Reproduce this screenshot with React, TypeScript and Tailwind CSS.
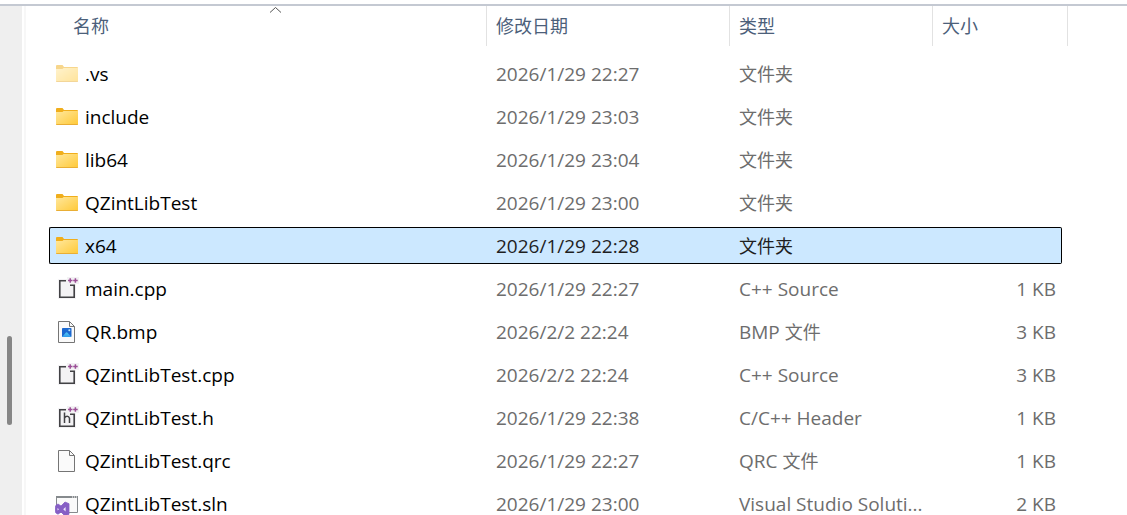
type IconKind = "folder" | "hiddenFolder" | "cpp" | "header" | "image" | "blank" | "solution";

type FileEntry = {
  name: string;
  date: string;
  type: string;
  size?: string;
  icon: IconKind;
};

const files: FileEntry[] = [
  { name: ".vs", date: "2026/1/29 22:27", type: "文件夹", icon: "hiddenFolder" },
  { name: "include", date: "2026/1/29 23:03", type: "文件夹", icon: "folder" },
  { name: "lib64", date: "2026/1/29 23:04", type: "文件夹", icon: "folder" },
  { name: "QZintLibTest", date: "2026/1/29 23:00", type: "文件夹", icon: "folder" },
  { name: "x64", date: "2026/1/29 22:28", type: "文件夹", icon: "folder" },
  { name: "main.cpp", date: "2026/1/29 22:27", type: "C++ Source", size: "1 KB", icon: "cpp" },
  { name: "QR.bmp", date: "2026/2/2 22:24", type: "BMP 文件", size: "3 KB", icon: "image" },
  { name: "QZintLibTest.cpp", date: "2026/2/2 22:24", type: "C++ Source", size: "3 KB", icon: "cpp" },
  { name: "QZintLibTest.h", date: "2026/1/29 22:38", type: "C/C++ Header", size: "1 KB", icon: "header" },
  { name: "QZintLibTest.qrc", date: "2026/1/29 22:27", type: "QRC 文件", size: "1 KB", icon: "blank" },
  { name: "QZintLibTest.sln", date: "2026/1/29 23:00", type: "Visual Studio Soluti...", size: "2 KB", icon: "solution" },
];

const selected = "x64";

function FolderShape() {
  return (
    <>
      <defs>
        <linearGradient id="folderFill" x1="0" y1="0" x2="1" y2="1">
          <stop offset="0" stopColor="#ffe79c" />
          <stop offset="1" stopColor="#ffc937" />
        </linearGradient>
      </defs>
      <path d="M1 5a1 1 0 0 1 1-1h5.5l1.500 2h13a1 1 0 0 1 1 1v3H1z" fill="#f0ae1c" />
      <path d="M1 8h6.500L8.500 7H23v13a1 1 0 0 1-1 1H2a1 1 0 0 1-1-1z" fill="url(#folderFill)" />
      <path d="M1 20h22a1 1 0 0 1-1 1H2a1 1 0 0 1-1-1z" fill="#e9ae35" />
    </>
  );
}

function PageShape() {
  return (
    <>
      <path d="M3.500 2.500h11l5 5v16h-16z" fill="#fafafa" stroke="#757575" />
      <path d="M14.500 2.500v5h5" fill="none" stroke="#757575" />
    </>
  );
}

function SourceShape() {
  return (
    <>
      <path d="M3 3h9V1h12v7h-3v15H3z" fill="#f3f2f4" />
      <path d="M11 4.800H4.800v16.400h14.400V9.200H15" fill="none" stroke="#424245" strokeWidth="1.600" />
      <path d="M13 4.500h4.500M15.200 2.300v4.500M18.200 4.500h4.500M20.400 2.300v4.500" stroke="#9b4f96" strokeWidth="1.500" />
    </>
  );
}

function FileIcon({ kind }: { kind: IconKind }) {
  return (
    <svg width="24" height="25" viewBox="0 0 24 25" className="shrink-0" aria-hidden="true">
      {kind === "folder" && <FolderShape />}
      {kind === "hiddenFolder" && (
        <g opacity="0.5">
          <FolderShape />
        </g>
      )}
      {kind === "cpp" && <SourceShape />}
      {kind === "header" && (
        <>
          <SourceShape />
          <path
            d="M9.500 7.500V18M9.500 13q1-1.700 2.700-1.700t2.300 2V18"
            fill="none"
            stroke="#424245"
            strokeWidth="1.500"
          />
        </>
      )}
      {kind === "blank" && <PageShape />}
      {kind === "image" && (
        <>
          <defs>
            <linearGradient id="mountainFill" x1="0" y1="0" x2="0" y2="1">
              <stop offset="0" stopColor="#55c8f5" />
              <stop offset="1" stopColor="#2f9bea" />
            </linearGradient>
          </defs>
          <PageShape />
          <rect x="7" y="9" width="9.500" height="9" rx="0.800" fill="#1c68cf" />
          <path d="M7.300 17.800l3.400-4q.9-1 1.800 0l3.700 4q-.2.200-.5.200H7.800z" fill="url(#mountainFill)" />
          <circle cx="14.300" cy="11.200" r="1" fill="#b9e6fb" />
        </>
      )}
      {kind === "solution" && (
        <>
          <path d="M1.500 5.500h21v16h-21z" fill="#fafafa" stroke="#868a8d" />
          <path d="M1 5h22v2H1z" fill="#868a8d" />
          <path d="M17 6h1M19 6h1M21 6h1" stroke="#fff" />
          <path
            d="M1 14.200l2-1.200 3 2 4-4 4 1.700v10.600l-4 1.700-4-4-3 2.200-2-1.200-.8-1.500v-4z"
            fill="#865fc5"
            stroke="#865fc5"
            strokeWidth="0.800"
            strokeLinejoin="round"
          />
          <path d="M2.500 17v2.400L4 18.200zM10.600 16v4.400L8.200 18.200z" fill="#efe6fb" />
        </>
      )}
    </svg>
  );
}

// Chinese glyphs are set slightly smaller than the Latin text beside them
function Label({ text }: { text: string }) {
  return (
    <>
      {text.split(/([\u4e00-\u9fff]+)/).map((part, i) =>
        i % 2 === 1 ? (
          <span key={i} className="text-lg/6">
            {part}
          </span>
        ) : (
          part
        )
      )}
    </>
  );
}

function FileRow({ file }: { file: FileEntry }) {
  const active = file.name === selected;
  const box = active ? "border-black bg-[#cce8ff] text-[#1f1f1f]" : "border-transparent text-[#6d6d6d]";
  const cell = `flex h-[37px] items-center border-y whitespace-nowrap ${box}`;

  return (
    <tr className="h-[43px]" aria-selected={active}>
      <td className="p-0">
        <div className={`${cell} gap-1.5 rounded-l-xs border-l pl-[5px]`}>
          <FileIcon kind={file.icon} />
          <span className="text-black">{file.name}</span>
        </div>
      </td>
      <td className="p-0">
        <div className={`${cell} pl-[9px]`}>{file.date}</div>
      </td>
      <td className="p-0">
        <div className={`${cell} pl-[9px]`}>
          <span className="whitespace-pre">
            <Label text={file.type} />
          </span>
        </div>
      </td>
      <td className="p-0">
        <div className={`${cell} mr-1.5 justify-end rounded-r-xs border-r pr-[5px]`}>{file.size}</div>
      </td>
    </tr>
  );
}

function HeaderCell({ label, sorted }: { label: string; sorted?: boolean }) {
  return (
    <th scope="col" className="h-[46px] p-0 align-top font-normal" aria-sort={sorted ? "ascending" : undefined}>
      <div className="relative h-10 border-r border-[#e2e2e2]">
        <button type="button" className={`flex h-full w-full items-center ${sorted ? "pl-6" : "pl-[9px]"}`}>
          {label}
        </button>
        {sorted && (
          <svg
            width="13"
            height="7"
            viewBox="0 0 13 7"
            className="pointer-events-none absolute top-0 right-0 left-4 mx-auto"
            aria-hidden="true"
          >
            <path d="M1 6.500l5.500-5 5.500 5" fill="none" stroke="#555" />
          </svg>
        )}
      </div>
    </th>
  );
}

export default function App() {
  return (
    <div className="flex h-screen flex-col overflow-hidden bg-white pt-1 font-['Open_Sans','Noto_Sans_CJK_SC',sans-serif] text-[19px]/6">
      <div className="h-0.5 shrink-0 bg-[#c4c9d2]" />
      <div className="flex min-h-0 flex-1">
        <aside className="w-[22px] shrink-0 bg-[#efefef]">
          <div className="mt-[330px] ml-[7px] h-[89px] w-[5px] rounded-full bg-[#868686]" />
        </aside>
        <div className="ml-0.5 w-0.5 shrink-0 bg-[#f7f7f7]" />
        <main className="min-w-0 flex-1 pr-[59px] pl-[23px]">
          <table className="w-full table-fixed border-collapse text-left">
            <colgroup>
              <col />
              <col className="w-[243px]" />
              <col className="w-[203px]" />
              <col className="w-[135px]" />
            </colgroup>
            <thead className="text-lg/6 text-[#4c607a]">
              <tr>
                <HeaderCell label="名称" sorted />
                <HeaderCell label="修改日期" />
                <HeaderCell label="类型" />
                <HeaderCell label="大小" />
              </tr>
            </thead>
            <tbody>
              {files.map((file) => (
                <FileRow key={file.name} file={file} />
              ))}
            </tbody>
          </table>
        </main>
      </div>
    </div>
  );
}
